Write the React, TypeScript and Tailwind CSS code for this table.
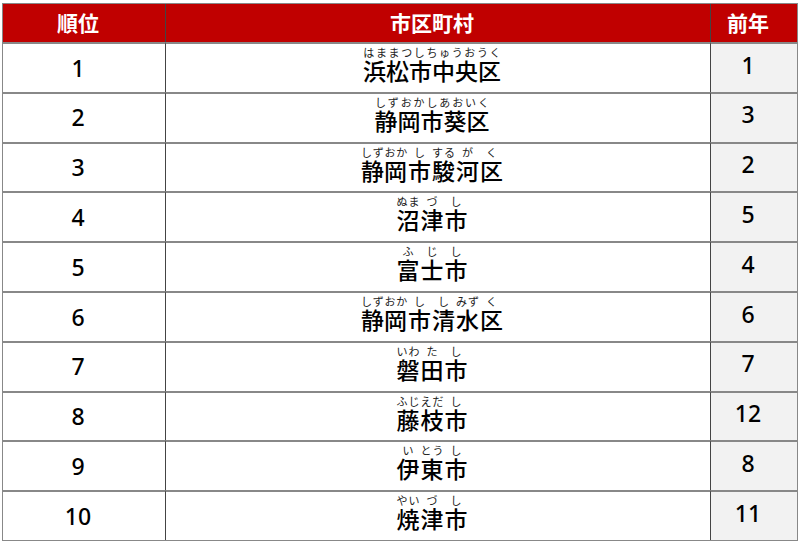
import React from 'react';

type Part = [string, string];

interface Row {
  rank: number;
  parts: Part[];
  prev: number;
}

const rows: Row[] = [
  { rank: 1, parts: [['浜松市中央区', 'はままつしちゅうおうく']], prev: 1 },
  { rank: 2, parts: [['静岡市葵区', 'しずおかしあおいく']], prev: 3 },
  { rank: 3, parts: [['静岡', 'しずおか'], ['市', 'し'], ['駿', 'する'], ['河', 'が'], ['区', 'く']], prev: 2 },
  { rank: 4, parts: [['沼', 'ぬま'], ['津', 'づ'], ['市', 'し']], prev: 5 },
  { rank: 5, parts: [['富', 'ふ'], ['士', 'じ'], ['市', 'し']], prev: 4 },
  { rank: 6, parts: [['静岡', 'しずおか'], ['市', 'し'], ['清', 'し'], ['水', 'みず'], ['区', 'く']], prev: 6 },
  { rank: 7, parts: [['磐', 'いわ'], ['田', 'た'], ['市', 'し']], prev: 7 },
  { rank: 8, parts: [['藤', 'ふじ'], ['枝', 'えだ'], ['市', 'し']], prev: 12 },
  { rank: 9, parts: [['伊', 'い'], ['東', 'とう'], ['市', 'し']], prev: 8 },
  { rank: 10, parts: [['焼', 'やい'], ['津', 'づ'], ['市', 'し']], prev: 11 },
];

const jp = { fontFamily: '"Noto Sans CJK JP", "Noto Sans", sans-serif' };
const num = { fontFamily: '"Noto Sans", "Open Sans", sans-serif' };

function Furigana({ parts }: { parts: Part[] }) {
  return (
    <div className="flex items-end" style={jp}>
      {parts.map(([base, kana], i) => (
        <div key={i} className="flex flex-col items-center">
          <div className="flex w-0 min-w-full justify-around text-[11px] leading-[12px] text-[#222]">
            {kana.split('').map((k, j) => (
              <span key={j} className="shrink-0">{k}</span>
            ))}
          </div>
          <div className="text-[23px] leading-[25px] font-medium px-[0.5px] text-black">{base}</div>
        </div>
      ))}
    </div>
  );
}

export default function App() {
  return (
    <div className="w-[800px] h-[543px] bg-white pl-[2px] pt-[3px]">
      <div className="w-[796px] h-[538px] border border-[#888] grid grid-cols-[163px_545px_1fr] grid-rows-[38px_repeat(10,1fr)]">
        <div className="bg-[#c00000] border-r border-[#444] flex items-center justify-center pr-3 text-white font-bold text-[21px]" style={jp}>順位</div>
        <div className="bg-[#c00000] border-r border-[#444] flex items-center justify-center pr-3 text-white font-bold text-[21px]" style={jp}>市区町村</div>
        <div className="bg-[#c00000] flex items-center justify-center pr-3 text-white font-bold text-[21px]" style={jp}>前年</div>
        {rows.map((r) => (
          <React.Fragment key={r.rank}>
            <div className="border-r border-[#444] border-t-2 border-t-[#888] flex items-center justify-center pr-3 text-[23px] font-medium text-black" style={num}>
              {r.rank}
            </div>
            <div className="border-r border-[#444] border-t-2 border-t-[#888] flex items-start justify-center pr-3 pt-[2px]">
              <Furigana parts={r.parts} />
            </div>
            <div className="bg-[#f2f2f2] border-t-2 border-t-[#888] flex items-center justify-center pr-3 pb-[6px] text-[23px] font-medium text-black" style={num}>
              {r.prev}
            </div>
          </React.Fragment>
        ))}
      </div>
    </div>
  );
}
